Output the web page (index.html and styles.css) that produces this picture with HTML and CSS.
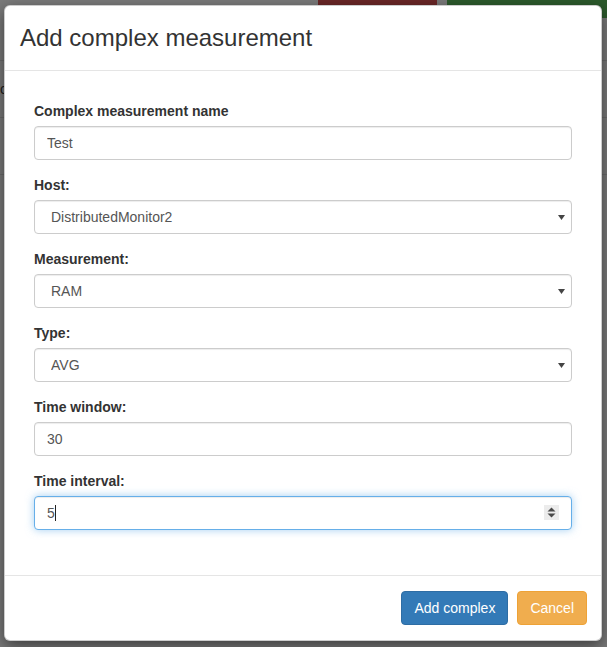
FILE: index.html
```html
<!DOCTYPE html>
<html>
<head>
<meta charset="utf-8">
<link rel="stylesheet" href="styles.css">
</head>
<body>
<div class="page">
  <div class="toolbar">
    <span class="pbtn pbtn-red"></span>
    <span class="pbtn pbtn-green"></span>
  </div>
  <div class="prow"><span class="ptext">c</span></div>
  <div class="prow"></div>
  <div class="prow"></div>
</div>

<div class="modal">
  <div class="modal-header">
    <h3 class="modal-title">Add complex measurement</h3>
  </div>
  <div class="modal-body">
    <form class="form">
      <div class="form-group">
        <label class="label">Complex measurement name</label>
        <input class="control" type="text" value="Test">
      </div>
      <div class="form-group">
        <label class="label">Host:</label>
        <div class="select-wrap">
          <select class="control select"><option>DistributedMonitor2</option></select>
          <svg class="arrow" width="7" height="5" viewBox="0 0 7 5"><path d="M0 0H7L3.5 5Z" fill="#444"/></svg>
        </div>
      </div>
      <div class="form-group">
        <label class="label">Measurement:</label>
        <div class="select-wrap">
          <select class="control select"><option>RAM</option></select>
          <svg class="arrow" width="7" height="5" viewBox="0 0 7 5"><path d="M0 0H7L3.5 5Z" fill="#444"/></svg>
        </div>
      </div>
      <div class="form-group">
        <label class="label">Type:</label>
        <div class="select-wrap">
          <select class="control select"><option>AVG</option></select>
          <svg class="arrow" width="7" height="5" viewBox="0 0 7 5"><path d="M0 0H7L3.5 5Z" fill="#444"/></svg>
        </div>
      </div>
      <div class="form-group">
        <label class="label">Time window:</label>
        <input class="control" type="text" value="30">
      </div>
      <div class="form-group">
        <label class="label">Time interval:</label>
        <div class="number-wrap">
          <input class="control focus number" type="number" value="5">
          <span class="caret"></span>
          <svg class="spinner" width="15" height="15" viewBox="0 0 15 15">
            <rect width="15" height="15" fill="#ececec"/>
            <path d="M3.5 6.5L7.5 2.5L11.5 6.5Z" fill="#4a4a4a"/>
            <path d="M3.5 8.5L11.5 8.5L7.5 12.5Z" fill="#4a4a4a"/>
          </svg>
        </div>
      </div>
    </form>
  </div>
  <div class="modal-footer">
    <button class="btn btn-primary" type="button">Add complex</button>
    <button class="btn btn-warning" type="button">Cancel</button>
  </div>
</div>
</body>
</html>
```
FILE: styles.css
```css
html, body {
  margin: 0;
  padding: 0;
}
body {
  background: #7a7a7a;
  font-family: "Liberation Sans", Arial, sans-serif;
  font-size: 14px;
  color: #333;
  width: 607px;
  height: 647px;
  overflow: hidden;
  position: relative;
}
.page {
  display: flex;
  flex-direction: column;
}
.toolbar {
  display: flex;
  gap: 10px;
  padding-left: 318px;
  height: 60px;
}
.pbtn {
  display: block;
  height: 18px;
}
.pbtn-red {
  width: 119px;
  background: #6a2727;
}
.pbtn-green {
  flex: 1;
  background: #2c5a2c;
}
.prow {
  height: 56px;
  border-top: 1px solid #6c6c6c;
  font-size: 14px;
  color: #1a1a1a;
  line-height: 56px;
}

.modal {
  position: absolute;
  top: 5px;
  left: 4px;
  width: 598px;
  box-sizing: border-box;
  background: #fff;
  border: 1px solid rgba(0, 0, 0, 0.2);
  border-radius: 6px;
  box-shadow: 0 5px 15px rgba(0, 0, 0, 0.5);
}
.modal-header {
  padding: 15px;
  border-bottom: 1px solid #e5e5e5;
}
.modal-title {
  margin: 0;
  font-size: 24px;
  font-weight: 500;
  line-height: 34px;
  color: #333;
}
.modal-body {
  padding: 15px;
}
.form {
  padding: 15px 14px;
  margin: 0;
}
.form-group {
  margin-bottom: 15px;
}
.label {
  display: block;
  font-weight: 700;
  line-height: 20px;
  margin-bottom: 5px;
  color: #333;
}
.control {
  display: block;
  width: 100%;
  height: 34px;
  box-sizing: border-box;
  padding: 6px 12px;
  font-family: "Liberation Sans", Arial, sans-serif;
  font-size: 14px;
  line-height: 20px;
  color: #555;
  background: #fff;
  border: 1px solid #ccc;
  border-radius: 4px;
  box-shadow: inset 0 1px 1px rgba(0, 0, 0, 0.075);
  outline: none;
  margin: 0;
}
.select-wrap, .number-wrap {
  position: relative;
}
.select {
  -webkit-appearance: none;
  appearance: none;
  padding-left: 16px;
}
.arrow {
  position: absolute;
  right: 7px;
  top: 15px;
}
.number {
  -moz-appearance: textfield;
}
.number::-webkit-inner-spin-button,
.number::-webkit-outer-spin-button {
  -webkit-appearance: none;
  margin: 0;
}
.focus {
  border-color: #66afe9;
  box-shadow: inset 0 1px 1px rgba(0, 0, 0, 0.075), 0 0 8px rgba(102, 175, 233, 0.6);
}
.caret {
  position: absolute;
  left: 21px;
  top: 9px;
  width: 1px;
  height: 16px;
  background: #222;
}
.spinner {
  position: absolute;
  right: 13px;
  top: 9px;
}
.modal-footer {
  display: flex;
  justify-content: flex-end;
  gap: 9px;
  padding: 15px 14px 15px 15px;
  border-top: 1px solid #e5e5e5;
}
.btn {
  font-family: "Liberation Sans", Arial, sans-serif;
  font-size: 14px;
  line-height: 20px;
  padding: 6px 12px;
  border: 1px solid transparent;
  border-radius: 4px;
  color: #fff;
  margin: 0;
}
.btn-primary {
  background: #337ab7;
  border-color: #2e6da4;
}
.btn-warning {
  background: #f0ad4e;
  border-color: #eea236;
}
```
